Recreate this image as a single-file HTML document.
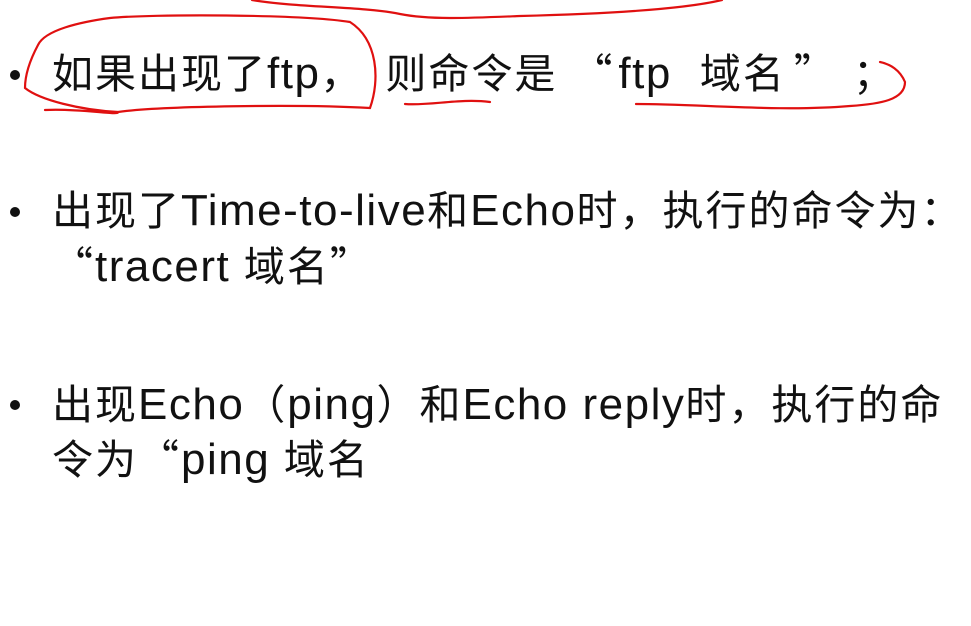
<!DOCTYPE html>
<html><head><meta charset="utf-8"><style>
html,body{margin:0;padding:0;background:#fff;width:971px;height:626px;overflow:hidden;position:relative}
.t{position:absolute;font-family:"Noto Sans CJK SC",sans-serif;font-size:41px;letter-spacing:2px;color:#111;white-space:nowrap;line-height:1}
.l{font-family:"Liberation Sans",sans-serif;font-size:44px;letter-spacing:1.5px}
.b{position:absolute;width:10px;height:10px;border-radius:50%;background:#111}
svg{position:absolute;left:0;top:0}
</style></head><body>
<div class="b" style="left:10px;top:70px"></div>
<div class="t" style="left:52px;top:50px">如果出现了<span class="l">ftp</span>，<span style="display:inline-block;width:22px"></span>则命令是<span style="display:inline-block;width:14px"></span>“<span style="display:inline-block;width:4px"></span><span class="l">ftp</span><span style="display:inline-block;width:28px"></span>域名<span style="display:inline-block;width:8px"></span>”<span style="display:inline-block;width:16px"></span>；</div>
<div class="b" style="left:10px;top:207px"></div>
<div class="t" style="left:52px;top:187px">出现了<span class="l">Time-to-live</span>和<span class="l">Echo</span>时，执行的命令为：</div>
<div class="t" style="left:52px;top:243px">“<span class="l">tracert </span>域名”</div>
<div class="b" style="left:10px;top:400px"></div>
<div class="t" style="left:52px;top:381px">出现<span class="l">Echo</span>（<span class="l">ping</span>）和<span class="l">Echo reply</span>时，执行的命</div>
<div class="t" style="left:52px;top:436px">令为“<span class="l">ping </span>域名</div>
<svg width="971" height="626" fill="none" stroke="#e01010" stroke-width="2.2" stroke-linecap="round">
<path d="M252 0 C300 8 360 6 400 14 C430 20 470 18 520 16 C600 14 680 10 722 0"/>
<path d="M45 110 C80 108 120 116 118 112 C160 106 300 104 370 108 C380 80 378 40 350 22 C300 14 150 14 110 18 C80 22 45 30 38 45 C30 60 25 75 25 88 C40 100 80 110 118 112"/>
<path d="M405 104 C430 106 460 98 490 102"/>
<path d="M636 104 C700 104 780 112 850 106 C880 104 905 100 905 82 C900 70 890 64 880 62"/>
</svg>
</body></html>
